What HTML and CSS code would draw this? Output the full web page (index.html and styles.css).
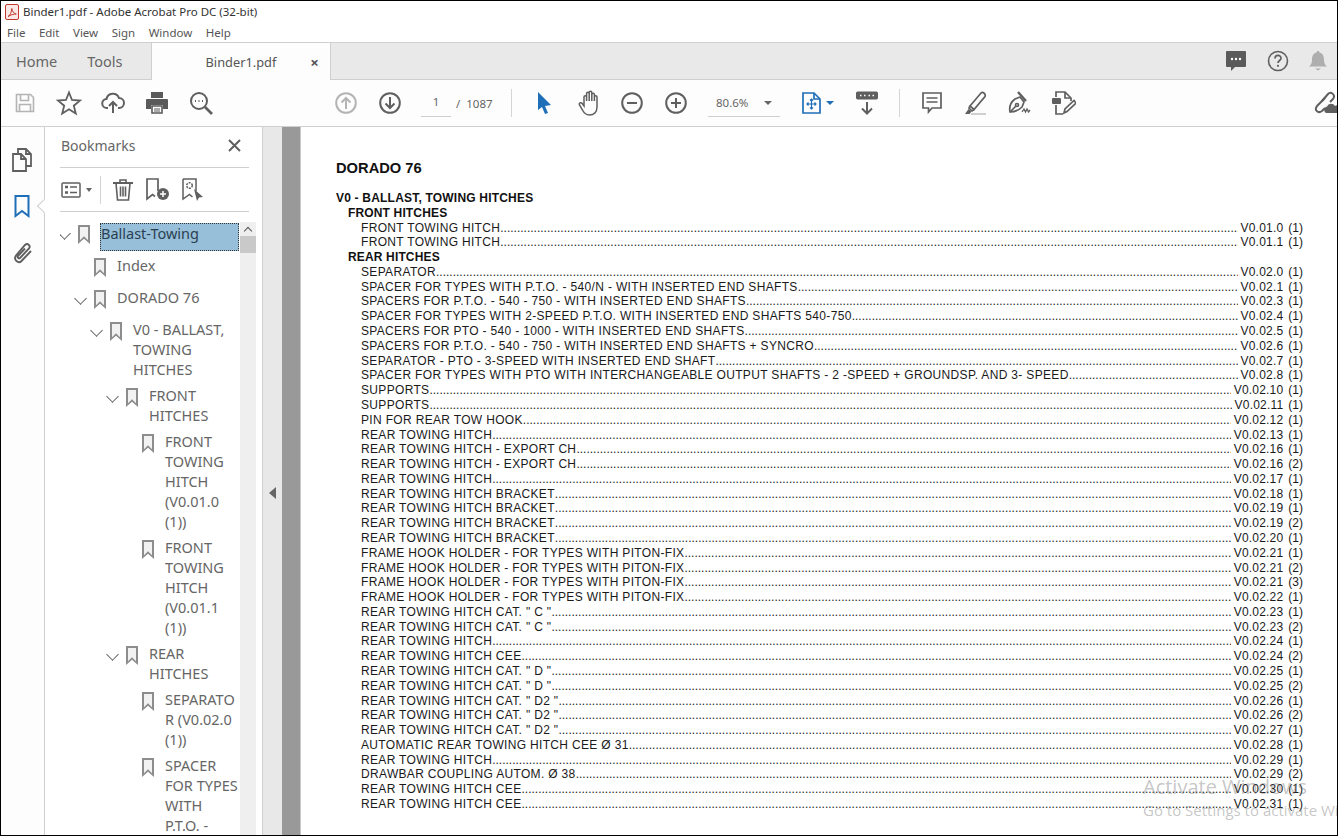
FILE: index.html
```html
<!DOCTYPE html>
<html lang="en">
<head>
    <meta charset="UTF-8">
    <title>Binder1.pdf - Adobe Acrobat Pro DC (32-bit)</title>
    <link rel="stylesheet" href="styles.css">
</head>
<body>
<div class="window">
    <div class="titlebar">
        <svg class="app-icon" width="14" height="16" viewBox="0 0 14 16"><rect x="0.5" y="0.5" width="13" height="15" rx="1.5" fill="#fbe9e7" stroke="#c0392b"/><path d="M3 12.5c2-1 3.500-4 3.800-8 .5 3 2 5 4.500 5.500-2.500 0-5.500.8-8.300 2.500z" fill="none" stroke="#c0392b"/></svg>
        <span>Binder1.pdf - Adobe Acrobat Pro DC (32-bit)</span>
    </div>
    <div class="menubar">
        <span>File</span><span>Edit</span><span>View</span><span>Sign</span><span>Window</span><span>Help</span>
    </div>
    <div class="tabbar">
        <span class="tab-link home">Home</span>
        <span class="tab-link tools">Tools</span>
        <div class="tab-active"><span>Binder1.pdf</span><b>×</b></div>
        <div class="tab-right">
            <svg width="22" height="22" viewBox="0 0 22 22"><path d="M2 1h18a1 1 0 0 1 1 1v14a1 1 0 0 1-1 1H10l-4 4v-4H2a1 1 0 0 1-1-1V2a1 1 0 0 1 1-1z" fill="#5a5a5a"/><circle cx="7" cy="9" r="1.200" fill="#fff"/><circle cx="11" cy="9" r="1.200" fill="#fff"/><circle cx="15" cy="9" r="1.200" fill="#fff"/></svg>
            <svg width="22" height="22" viewBox="0 0 22 22"><circle cx="11" cy="11" r="9.500" fill="none" stroke="#5f5f5f" stroke-width="1.600"/><path d="M8 8.500c0-4 6-4 6-.3 0 2.300-3 2.300-3 4.800" fill="none" stroke="#5f5f5f" stroke-width="1.700"/><circle cx="11" cy="15.800" r="1.100" fill="#5f5f5f"/></svg>
            <svg width="18" height="22" viewBox="0 0 18 22"><path d="M9 1c1 0 1.500.7 1.500 1.500C14 3.500 15 6 15 10c0 3 1 5 3 6.500H0C2 15 3 13 3 10c0-4 1-6.500 4.500-7.500C7.500 1.700 8 1 9 1z" fill="#aeaeae"/><path d="M6 18.500h6L9 20.500z" fill="#aeaeae"/></svg>
        </div>
    </div>

    <div class="toolbar">
        <button class="tool"><svg width="20" height="20" viewBox="0 0 20 20" fill="none" stroke="#b4b4b4" stroke-width="1.600"><path d="M1.500 1.500h14l3 3v14h-17z"/><path d="M5.500 1.500v6h8v-6M4.500 18.500v-7h11v7"/></svg></button>
        <button class="tool"><svg width="26" height="26" viewBox="0 0 26 26" fill="none" stroke="#5f5f5f" stroke-width="1.800"><path d="M13 2.500l3 7.500 8 .6-6.200 5.100 2 7.800-6.800-4.300-6.800 4.300 2-7.800L2 10.600l8-.6z"/></svg></button>
        <button class="tool"><svg width="24" height="24" viewBox="0 0 24 24" fill="none" stroke="#5f5f5f" stroke-width="2"><path d="M7 17H6a4.500 4.500 0 0 1-.5-9 6.500 6.500 0 0 1 12.500-1 5 5 0 0 1 0 10h-1"/><path d="M12 22V11M8 15l4-4 4 4"/></svg></button>
        <button class="tool"><svg width="24" height="24" viewBox="0 0 24 24"><path d="M6 1h12v6H6z" fill="#5a5a5a"/><path d="M2 8h20a1 1 0 0 1 1 1v9h-5v-4H6v4H1V9a1 1 0 0 1 1-1z" fill="#5a5a5a"/><path d="M7 15h10v7H7z" fill="#fff" stroke="#5a5a5a" stroke-width="1.600"/><path d="M9 18h6M9 20h6" stroke="#5a5a5a"/></svg></button>
        <button class="tool"><svg width="24" height="24" viewBox="0 0 24 24" fill="none" stroke="#5f5f5f" stroke-width="2"><circle cx="10" cy="10" r="8"/><path d="M16 16l7 7" stroke-width="2.600"/><path d="M6 10h1M9.500 10h1M13 10h1" stroke-width="1.800"/></svg></button>

        <button class="tool nav-start"><svg width="22" height="22" viewBox="0 0 22 22" fill="none" stroke="#b4b4b4" stroke-width="2"><circle cx="11" cy="11" r="9.800"/><path d="M11 17V6M6.500 10.500L11 6l4.500 4.500"/></svg></button>
        <button class="tool"><svg width="22" height="22" viewBox="0 0 22 22" fill="none" stroke="#5f5f5f" stroke-width="2"><circle cx="11" cy="11" r="9.800"/><path d="M11 5v11M6.500 11.500L11 16l4.500-4.500"/></svg></button>
        <div class="page-nav"><span class="page-box">1</span><span class="page-sep">/</span><span>1087</span></div>
        <i class="sep sep-a"></i>
        <button class="tool cursor-btn"><svg width="16" height="22" viewBox="0 0 16 22"><path d="M2 0l13 13-6 1 3 7-3 1-3-7-4 3z" fill="#1f6fb8"/></svg></button>
        <button class="tool hand-btn"><svg width="24" height="26" viewBox="0 0 24 26" fill="none" stroke="#5f5f5f" stroke-width="1.500"><path d="M6 16V7a1.300 1.300 0 0 1 2.600 0v4V3.500a1.300 1.300 0 0 1 2.600 0V11V2.500a1.300 1.300 0 0 1 2.600 0V11V4.500a1.300 1.300 0 0 1 2.600 0V11V7a1.300 1.300 0 0 1 2.600 0v10c0 5-3 8-7.500 8-4 0-5.500-2-7-5l-3-5c-1-2 1.500-3 2.700-1.500z"/></svg></button>
        <button class="tool"><svg width="22" height="22" viewBox="0 0 22 22" fill="none" stroke="#5f5f5f" stroke-width="2"><circle cx="11" cy="11" r="9.800"/><path d="M6 11h10"/></svg></button>
        <button class="tool"><svg width="22" height="22" viewBox="0 0 22 22" fill="none" stroke="#5f5f5f" stroke-width="2"><circle cx="11" cy="11" r="9.800"/><path d="M6 11h10M11 6v10"/></svg></button>
        <div class="zoom-box"><span>80.6%</span><i class="caret"></i></div>
        <button class="tool fit-btn"><svg width="19" height="22" viewBox="0 0 19 22" fill="none" stroke="#1f6fb8" stroke-width="1.700"><path d="M1 1h11l6 6v14H1z"/><path d="M12 1v6h6"/><path d="M9.500 7v10M5 12h9M8 8.500l1.500-1.500L11 8.500M8 15.500l1.500 1.500 1.500-1.500M6.500 10.500L5 12l1.500 1.500M12.500 10.500L14 12l-1.500 1.500" stroke-width="1.200"/></svg><i class="caret blue"></i></button>
        <button class="tool"><svg width="22" height="24" viewBox="0 0 22 24" fill="none" stroke="#5f5f5f"><rect x="0.500" y="1" width="21" height="7" rx="1" fill="#5f5f5f"/><path d="M4 4.500h1.500M8 4.500h1.500M12.500 4.500h1.500M16.500 4.500h1.500" stroke="#fff" stroke-width="1.500"/><path d="M11 11v11M6 17.500l5 5 5-5" stroke-width="2"/></svg></button>
        <i class="sep sep-b"></i>
        <button class="tool"><svg width="20" height="22" viewBox="0 0 20 22" fill="none" stroke="#5f5f5f" stroke-width="1.700"><path d="M1 1h18v15h-9l-3.500 4v-4H1z"/><path d="M4.500 6h11M4.500 10h11" stroke-width="1.300"/></svg></button>
        <button class="tool"><svg width="24" height="24" viewBox="0 0 24 24" fill="none" stroke="#5f5f5f" stroke-width="1.700"><path d="M6 15L17 2c2-1.500 5 1 4 3.500L10 18.500z"/><path d="M6 15l-1 2 3 3 2-1.500" /><path d="M1 23l3.500-5 3 2.500-2 2.500z" fill="#5f5f5f" stroke="none"/><path d="M7 23h15" stroke="#cfcfcf" stroke-width="2"/></svg></button>
        <button class="tool"><svg width="24" height="24" viewBox="0 0 24 24" fill="none" stroke="#5f5f5f" stroke-width="1.700"><path d="M2 21c-1-5 1-10 5-13l5-2 4 5-2 5c-3 3-7 5-12 5z"/><path d="M2 21l6-6"/><circle cx="9" cy="14" r="1.500"/><path d="M10 1l8 9" stroke-width="2.400"/><path d="M14 21l2-3 1.500 3 1.500-3 1.500 3 1.500-2" stroke-width="1.300"/></svg></button>
        <button class="tool"><svg width="24" height="24" viewBox="0 0 24 24" fill="none" stroke="#5f5f5f" stroke-width="1.700"><path d="M4 6V1h9l6 6v3"/><path d="M13 1v6h6"/><path d="M4 14v9h7"/><rect x="0" y="7" width="9" height="6" rx="1" fill="#5f5f5f" stroke="none"/><path d="M12 22l1-4 9-8.500 2 2.500-9 8.500z"/></svg></button>
        <div class="toolbar-end"><svg width="28" height="24" viewBox="0 0 28 24" fill="none" stroke="#5f5f5f" stroke-width="2"><path d="M11 10l6-7c3-3 8 1 5 5l-3 3"/><path d="M14 7l-8 8c-3 4 1 8 5 5l3-3" /><path d="M15 22a3.500 3.500 0 0 1 1-6.500 4.500 4.500 0 0 1 8-.5 3.500 3.500 0 0 1 4 7z" fill="#5f5f5f" stroke="none"/></svg></div>
    </div>

    <div class="main">
        <div class="rail">
            <svg width="20" height="24" viewBox="0 0 20 24" fill="none" stroke="#5f5f5f" stroke-width="1.800"><path d="M6 5V1h8l5 5v12h-5"/><path d="M14 1v5h5"/><path d="M1 6h8l5 5v12H1z" fill="#fdfdfd"/><path d="M9 6v5h5"/></svg>
            <svg class="rail-on" width="16" height="23" viewBox="0 0 16 23" fill="none" stroke="#1f6fb8" stroke-width="2"><path d="M1.500 1h13v20l-6.500-5-6.500 5z"/></svg>
            <svg width="22" height="24" viewBox="0 0 22 24" fill="none" stroke="#5f5f5f" stroke-width="1.900"><path d="M20 10l-9.500 10c-3 3-8.500-1-5.500-5.500L14 4c2.500-2.500 6 .5 4 3.500L9 17c-1 1-3-.5-2-2l7-7.500"/></svg>
        </div>
        <i class="rail-notch"></i>

        <aside class="panel">
            <div class="panel-head">
                <span>Bookmarks</span>
                <svg width="13" height="13" viewBox="0 0 13 13" stroke="#5f5f5f" stroke-width="2"><path d="M1 1l11 11M12 1L1 12"/></svg>
            </div>
            <div class="panel-tools">
                <svg width="20" height="16" viewBox="0 0 20 16" fill="none" stroke="#5f5f5f" stroke-width="1.500"><rect x="1" y="1" width="18" height="14" rx="1"/><path d="M4 5h3M4 10.500h3" stroke-width="2.500"/><path d="M9 5h7M9 10.500h7"/></svg>
                <i class="caret small"></i>
                <i class="panel-sep"></i>
                <svg class="t-trash" width="20" height="22" viewBox="0 0 20 22" fill="none" stroke="#5f5f5f" stroke-width="1.600"><path d="M0 4h20" stroke-width="2"/><path d="M7 4V1h6v3M3 4l1.500 17h11L17 4M7.500 7.500v10M10 7.500v10M12.500 7.500v10"/></svg>
                <svg class="t-add" width="24" height="23" viewBox="0 0 24 23" fill="none" stroke="#5f5f5f" stroke-width="1.700"><path d="M12 13V1H1v20l5.500-4.500 2.500 2"/><circle cx="17" cy="16" r="6" fill="#5f5f5f" stroke="none"/><path d="M14 16h6M17 13v6" stroke="#fff" stroke-width="1.500"/></svg>
                <svg class="t-prop" width="22" height="23" viewBox="0 0 22 23" fill="none" stroke="#5f5f5f" stroke-width="1.500"><path d="M1 1h13v12M1 1v20l6.500-4.500 3 2.500"/><circle cx="7.500" cy="7.500" r="2.800" stroke-dasharray="2 1"/><path d="M12 11l9 8-4 .5-2 3.500z" fill="#5f5f5f" stroke="none"/></svg>
            </div>
            <div class="tree-wrap">
                <ul class="tree">
                    <li class="node lvl0 open selected"><span class="mark"></span><span class="label">Ballast-Towing</span></li>
                    <li class="node lvl1"><span class="mark"></span><span class="label">Index</span></li>
                    <li class="node lvl1 open"><span class="mark"></span><span class="label">DORADO 76</span></li>
                    <li class="node lvl2 open"><span class="mark"></span><span class="label">V0 - BALLAST, TOWING HITCHES</span></li>
                    <li class="node lvl3 open"><span class="mark"></span><span class="label">FRONT HITCHES</span></li>
                    <li class="node lvl4"><span class="mark"></span><span class="label">FRONT TOWING HITCH (V0.01.0 (1))</span></li>
                    <li class="node lvl4"><span class="mark"></span><span class="label">FRONT TOWING HITCH (V0.01.1 (1))</span></li>
                    <li class="node lvl3 open"><span class="mark"></span><span class="label">REAR HITCHES</span></li>
                    <li class="node lvl4"><span class="mark"></span><span class="label">SEPARATOR (V0.02.0 (1))</span></li>
                    <li class="node lvl4"><span class="mark"></span><span class="label">SPACER FOR TYPES WITH P.T.O. - 540/N</span></li>
                </ul>
                <div class="scrollbar"><span class="arrow"></span><span class="thumb"></span></div>
            </div>
        </aside>

        <div class="gutter"><i class="collapse"></i></div>
        <div class="viewer-edge"></div>

        <section class="page">
            <h1>DORADO 76</h1>
            <h2>V0 - BALLAST, TOWING HITCHES</h2>
            <h3>FRONT HITCHES</h3>
            <ul class="toc">
                <li><span>FRONT TOWING HITCH</span><i></i><em>V0.01.0</em><u>(1)</u></li>
                <li><span>FRONT TOWING HITCH</span><i></i><em>V0.01.1</em><u>(1)</u></li>
            </ul>
            <h3>REAR HITCHES</h3>
            <ul class="toc">
                <li><span>SEPARATOR</span><i></i><em>V0.02.0</em><u>(1)</u></li>
                <li><span>SPACER FOR TYPES WITH P.T.O. - 540/N - WITH INSERTED END SHAFTS</span><i></i><em>V0.02.1</em><u>(1)</u></li>
                <li><span>SPACERS FOR P.T.O. - 540 - 750 - WITH INSERTED END SHAFTS</span><i></i><em>V0.02.3</em><u>(1)</u></li>
                <li><span>SPACER FOR TYPES WITH 2-SPEED P.T.O. WITH INSERTED END SHAFTS 540-750</span><i></i><em>V0.02.4</em><u>(1)</u></li>
                <li><span>SPACERS FOR PTO - 540 - 1000 - WITH INSERTED END SHAFTS</span><i></i><em>V0.02.5</em><u>(1)</u></li>
                <li><span>SPACERS FOR P.T.O. - 540 - 750 - WITH INSERTED END SHAFTS + SYNCRO</span><i></i><em>V0.02.6</em><u>(1)</u></li>
                <li><span>SEPARATOR - PTO - 3-SPEED WITH INSERTED END SHAFT</span><i></i><em>V0.02.7</em><u>(1)</u></li>
                <li><span>SPACER FOR TYPES WITH PTO WITH INTERCHANGEABLE OUTPUT SHAFTS - 2 -SPEED + GROUNDSP. AND 3- SPEED</span><i></i><em>V0.02.8</em><u>(1)</u></li>
                <li><span>SUPPORTS</span><i></i><em>V0.02.10</em><u>(1)</u></li>
                <li><span>SUPPORTS</span><i></i><em>V0.02.11</em><u>(1)</u></li>
                <li><span>PIN FOR REAR TOW HOOK</span><i></i><em>V0.02.12</em><u>(1)</u></li>
                <li><span>REAR TOWING HITCH</span><i></i><em>V0.02.13</em><u>(1)</u></li>
                <li><span>REAR TOWING HITCH - EXPORT CH</span><i></i><em>V0.02.16</em><u>(1)</u></li>
                <li><span>REAR TOWING HITCH - EXPORT CH</span><i></i><em>V0.02.16</em><u>(2)</u></li>
                <li><span>REAR TOWING HITCH</span><i></i><em>V0.02.17</em><u>(1)</u></li>
                <li><span>REAR TOWING HITCH BRACKET</span><i></i><em>V0.02.18</em><u>(1)</u></li>
                <li><span>REAR TOWING HITCH BRACKET</span><i></i><em>V0.02.19</em><u>(1)</u></li>
                <li><span>REAR TOWING HITCH BRACKET</span><i></i><em>V0.02.19</em><u>(2)</u></li>
                <li><span>REAR TOWING HITCH BRACKET</span><i></i><em>V0.02.20</em><u>(1)</u></li>
                <li><span>FRAME HOOK HOLDER - FOR TYPES WITH PITON-FIX</span><i></i><em>V0.02.21</em><u>(1)</u></li>
                <li><span>FRAME HOOK HOLDER - FOR TYPES WITH PITON-FIX</span><i></i><em>V0.02.21</em><u>(2)</u></li>
                <li><span>FRAME HOOK HOLDER - FOR TYPES WITH PITON-FIX</span><i></i><em>V0.02.21</em><u>(3)</u></li>
                <li><span>FRAME HOOK HOLDER - FOR TYPES WITH PITON-FIX</span><i></i><em>V0.02.22</em><u>(1)</u></li>
                <li><span>REAR TOWING HITCH CAT. " C "</span><i></i><em>V0.02.23</em><u>(1)</u></li>
                <li><span>REAR TOWING HITCH CAT. " C "</span><i></i><em>V0.02.23</em><u>(2)</u></li>
                <li><span>REAR TOWING HITCH</span><i></i><em>V0.02.24</em><u>(1)</u></li>
                <li><span>REAR TOWING HITCH CEE</span><i></i><em>V0.02.24</em><u>(2)</u></li>
                <li><span>REAR TOWING HITCH CAT. " D "</span><i></i><em>V0.02.25</em><u>(1)</u></li>
                <li><span>REAR TOWING HITCH CAT. " D "</span><i></i><em>V0.02.25</em><u>(2)</u></li>
                <li><span>REAR TOWING HITCH CAT. " D2 "</span><i></i><em>V0.02.26</em><u>(1)</u></li>
                <li><span>REAR TOWING HITCH CAT. " D2 "</span><i></i><em>V0.02.26</em><u>(2)</u></li>
                <li><span>REAR TOWING HITCH CAT. " D2 "</span><i></i><em>V0.02.27</em><u>(1)</u></li>
                <li><span>AUTOMATIC REAR TOWING HITCH CEE Ø 31</span><i></i><em>V0.02.28</em><u>(1)</u></li>
                <li><span>REAR TOWING HITCH</span><i></i><em>V0.02.29</em><u>(1)</u></li>
                <li><span>DRAWBAR COUPLING AUTOM. Ø 38</span><i></i><em>V0.02.29</em><u>(2)</u></li>
                <li><span>REAR TOWING HITCH CEE</span><i></i><em>V0.02.30</em><u>(1)</u></li>
                <li><span>REAR TOWING HITCH CEE</span><i></i><em>V0.02.31</em><u>(1)</u></li>
            </ul>
            <div class="activate">
                <p class="a1">Activate Windows</p>
                <p class="a2">Go to Settings to activate Windows.</p>
            </div>
        </section>
    </div>
</div>
</body>
</html>
```

FILE: styles.css
```css
* {
    margin: 0;
    padding: 0;
    box-sizing: border-box;
}

html, body {
    height: 100%;
    overflow: hidden;
}

body {
    font-family: 'Noto Sans', sans-serif;
    background: #fff;
    color: #444;
}

ul {
    list-style: none;
}

i, em, u {
    font-style: normal;
    text-decoration: none;
}

button {
    border: none;
    background: none;
    font: inherit;
}

.window {
    width: 1338px;
    height: 836px;
    border: 1px solid #000;
    display: flex;
    flex-direction: column;
    overflow: hidden;
    background: #fff;
}

/* title + menu */
.titlebar {
    height: 21px;
    flex: none;
    display: flex;
    align-items: center;
    gap: 4px;
    padding-left: 4px;
    font-size: 11.500px;
    color: #333;
}

.menubar {
    height: 21px;
    flex: none;
    display: flex;
    align-items: center;
    padding-left: 6px;
    gap: 13.500px;
    font-size: 11.500px;
    color: #555;
    border-bottom: 1px solid #d0d0d0;
}

/* tabs */
.tabbar {
    height: 37px;
    flex: none;
    display: flex;
    align-items: center;
    background: #e9e9e9;
    border-bottom: 1px solid #cfcfcf;
    font-size: 14.500px;
    color: #666;
    position: relative;
}

.tab-link.home {
    margin-left: 15px;
}

.tab-link.tools {
    margin-left: 30px;
}

.tab-active {
    margin-left: 28px;
    width: 180px;
    height: 37px;
    margin-bottom: -1px;
    background: #fdfdfd;
    border-left: 1px solid #cfcfcf;
    border-right: 1px solid #cfcfcf;
    display: flex;
    align-items: center;
    font-size: 12.800px;
    color: #555;
}

.tab-active span {
    margin-left: 54px;
}

.tab-active b {
    margin-left: 34px;
    font-size: 15px;
    color: #555;
}

.tab-right {
    margin-left: auto;
    margin-right: 10px;
    display: flex;
    align-items: center;
    gap: 20px;
}

/* main toolbar */
.toolbar {
    height: 47px;
    flex: none;
    display: flex;
    align-items: center;
    padding-left: 2px;
    background: #fdfdfd;
    border-bottom: 1px solid #cfcfcf;
}

.tool {
    width: 44px;
    height: 44px;
    flex: none;
    display: flex;
    align-items: center;
    justify-content: center;
}

.hand-btn {
    padding-left: 3px;
}

.nav-start {
    margin-left: 101px;
}

.page-nav {
    width: 90px;
    display: flex;
    align-items: center;
    font-size: 11.500px;
    color: #666;
    margin-left: 9px;
}

.page-box {
    width: 30px;
    height: 28px;
    line-height: 26px;
    text-align: center;
    border-bottom: 1px solid #cfcfcf;
    margin-right: 5px;
}

.page-sep {
    margin-right: 6px;
}

.sep {
    width: 1px;
    height: 28px;
    background: #d4d4d4;
    flex: none;
}

.sep-a {
    margin-right: 10px;
}

.sep-b {
    margin: 0 10px;
}

.zoom-box {
    width: 72px;
    height: 28px;
    margin-left: 10px;
    margin-right: 9px;
    display: flex;
    align-items: center;
    justify-content: space-between;
    padding: 0 8px;
    font-size: 11.500px;
    color: #666;
    border-bottom: 1px solid #cfcfcf;
}

.caret {
    width: 0;
    height: 0;
    border-left: 4px solid transparent;
    border-right: 4px solid transparent;
    border-top: 4px solid #666;
    flex: none;
}

.caret.blue {
    border-top-color: #1f6fb8;
    margin-left: 5px;
}

.caret.small {
    border-left-width: 3.500px;
    border-right-width: 3.500px;
    margin-left: 5px;
}

.fit-btn {
    width: 56px;
    padding-left: 13px;
    justify-content: flex-start;
}

.toolbar-end {
    margin-left: auto;
    height: 24px;
    width: 26px;
    overflow: hidden;
}

/* body of the window */
.main {
    flex: 1;
    min-height: 0;
    display: flex;
    position: relative;
}

.rail {
    width: 44px;
    flex: none;
    display: flex;
    flex-direction: column;
    align-items: center;
    gap: 23px;
    padding: 21px 2px 0 0;
    border-right: 1px solid #cfcfcf;
    background: #fdfdfd;
}

.rail-notch {
    position: absolute;
    left: 38px;
    top: 74px;
    width: 10px;
    height: 10px;
    background: #fff;
    border-left: 1px solid #cfcfcf;
    border-bottom: 1px solid #cfcfcf;
    transform: rotate(45deg);
}

.panel {
    width: 218px;
    flex: none;
    background: #fff;
    border-right: 1px solid #cfcfcf;
    display: flex;
    flex-direction: column;
    padding-left: 15px;
    min-height: 0;
}

.panel-head {
    width: 189px;
    height: 41px;
    flex: none;
    display: flex;
    align-items: center;
    justify-content: space-between;
    padding: 0 8px 3px 1px;
    font-size: 14px;
    color: #666;
    border-bottom: 1px solid #cfcfcf;
}

.panel-tools {
    width: 189px;
    height: 44px;
    flex: none;
    display: flex;
    align-items: center;
    padding-left: 1px;
    border-bottom: 1px solid #cfcfcf;
}

.panel-sep {
    width: 1px;
    height: 28px;
    background: #d4d4d4;
    margin-left: 8px;
}

.t-trash {
    margin-left: 12px;
}

.t-add {
    margin-left: 13px;
}

.t-prop {
    margin-left: 12px;
}

.tree-wrap {
    flex: 1;
    min-height: 0;
    display: flex;
    overflow: hidden;
    padding-top: 10px;
}

.tree {
    width: 180px;
    flex: none;
    display: flex;
    flex-direction: column;
    gap: 6px;
    padding-top: 2px;
    font-size: 14.500px;
    line-height: 20px;
    color: #666;
}

.node {
    display: flex;
    align-items: flex-start;
    min-height: 26px;
    position: relative;
    flex: none;
}

.lvl0 { padding-left: 18px; }
.lvl1 { padding-left: 34px; }
.lvl2 { padding-left: 50px; }
.lvl3 { padding-left: 66px; }
.lvl4 { padding-left: 82px; }

/* chevron for nodes with children */
.node.open::before {
    content: "";
    position: absolute;
    width: 8px;
    height: 8px;
    margin-left: -18px;
    margin-top: 5px;
    border-right: 1.500px solid #666;
    border-bottom: 1.500px solid #666;
    transform: rotate(45deg);
}

/* bookmark ribbon */
.mark {
    width: 12px;
    height: 19px;
    flex: none;
    margin: 1px 11px 0 0;
    background: #8d8d8d;
    clip-path: polygon(0 0, 100% 0, 100% 100%, 50% 72%, 0 100%);
    position: relative;
}

.mark::after {
    content: "";
    position: absolute;
    left: 2px;
    top: 2px;
    right: 2px;
    bottom: 2px;
    background: #f2f2f2;
    clip-path: polygon(0 0, 100% 0, 100% 88%, 50% 62%, 0 88%);
}

.label {
    width: 75px;
    margin-top: -2px;
    margin-bottom: 2px;
    overflow-wrap: anywhere;
}

.lvl0 .label { width: 139px; }
.lvl1 .label { width: 123px; }
.lvl2 .label { width: 107px; }
.lvl3 .label { width: 91px; }

.selected .label {
    height: 28px;
    margin: -1px 0 0 -1px;
    padding: 0 0 0 1px;
    line-height: 20px;
    background: #98bfda;
    color: #2b3f50;
    outline: 1px dotted #333;
    outline-offset: -1px;
}

.scrollbar {
    width: 16px;
    flex: none;
    background: #efefef;
    display: flex;
    flex-direction: column;
}

.scrollbar .arrow {
    height: 14px;
    position: relative;
}

.scrollbar .arrow::after {
    content: "";
    position: absolute;
    left: 5px;
    top: 6px;
    width: 5px;
    height: 5px;
    border-left: 1.500px solid #555;
    border-top: 1.500px solid #555;
    transform: rotate(45deg);
}

.scrollbar .thumb {
    height: 17px;
    background: #c9c9c9;
}

.gutter {
    width: 19px;
    flex: none;
    background: #e8e8e8;
    display: flex;
    align-items: center;
    justify-content: center;
    padding-top: 24px;
}

.collapse {
    width: 0;
    height: 0;
    border-top: 6px solid transparent;
    border-bottom: 6px solid transparent;
    border-right: 7px solid #666;
}

.viewer-edge {
    width: 19px;
    flex: none;
    background: #999;
    border-right: 1px solid #c8c8c8;
}

/* pdf page */
.page {
    flex: 1;
    min-width: 0;
    background: #fff;
    padding: 32px 34px 0 35px;
    position: relative;
    overflow: hidden;
    font-family: 'Liberation Sans', Arial, sans-serif;
    color: #1a1a1a;
    font-size: 12px;
    line-height: 14.780px;
}

.page h1 {
    font-size: 14.700px;
    font-weight: bold;
    color: #111;
    line-height: 18px;
    margin-bottom: 14px;
}

.page h2, .page h3 {
    font-size: 12px;
    font-weight: bold;
    color: #111;
    letter-spacing: .2px;
}

.page h3 {
    padding-left: 12px;
    letter-spacing: .15px;
}

.toc {
    padding-left: 25px;
}

.toc li {
    display: flex;
    white-space: nowrap;
    letter-spacing: .33px;
}

.toc i {
    flex: 1;
    min-width: 0;
    overflow: hidden;
    margin-right: 3px;
    letter-spacing: 0;
}

.toc i::after {
    content: "......................................................................................................................................................................................................................................................................................................................";
}

.toc em {
    flex: none;
    letter-spacing: .2px;
}

.toc u {
    flex: none;
    margin-left: 5px;
    letter-spacing: 0;
}

.activate {
    position: absolute;
    left: 842px;
    top: 647px;
    white-space: nowrap;
    color: rgba(110, 110, 110, .4);
    font-family: 'Open Sans', sans-serif;
}

.a1 {
    font-size: 20px;
    line-height: 26px;
}

.a2 {
    font-size: 15px;
    line-height: 20px;
}
```
